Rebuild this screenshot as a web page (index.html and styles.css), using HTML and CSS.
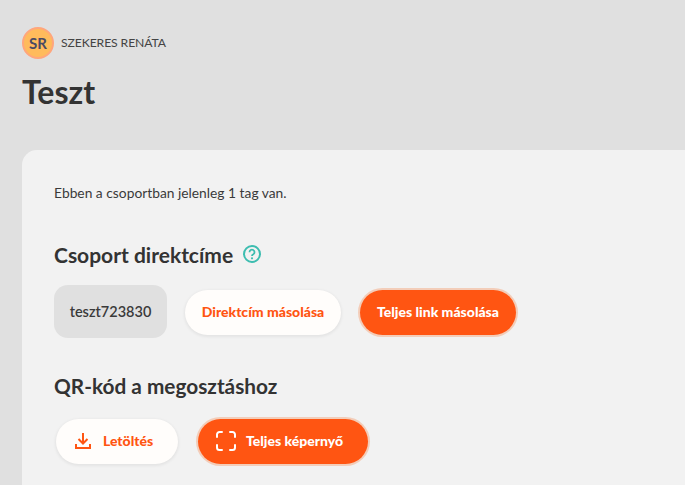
FILE: index.html
```html
<!DOCTYPE html>
<html lang="hu">
<head>
<meta charset="utf-8">
<title>Teszt</title>
<link rel="stylesheet" href="styles.css">
</head>
<body>
<main class="page">
  <div class="owner">
    <span class="avatar">SR</span>
    <span class="owner-name">SZEKERES RENÁTA</span>
  </div>
  <h1 class="title">Teszt</h1>
  <section class="card">
    <p class="intro">Ebben a csoportban jelenleg 1 tag van.</p>
    <h2 class="heading heading-link">Csoport direktcíme
      <svg class="help" width="18" height="18" viewBox="0 0 18 18" aria-hidden="true">
        <circle cx="9" cy="9" r="8" fill="none" stroke="#3dbdb0" stroke-width="2"/>
        <path d="M6.500 7.200a2.500 2.500 0 1 1 3.800 2.100c-.9.500-1.300.8-1.300 1.600" fill="none" stroke="#3dbdb0" stroke-width="1.800"/>
        <circle cx="9" cy="13.300" r="1.100" fill="#3dbdb0"/>
      </svg>
    </h2>
    <div class="row row-link">
      <span class="code">teszt723830</span>
      <button class="btn btn-light btn-direct">Direktcím másolása</button>
      <button class="btn btn-solid btn-full">Teljes link másolása</button>
    </div>
    <h2 class="heading heading-qr">QR-kód a megosztáshoz</h2>
    <div class="row row-qr">
      <button class="btn btn-light btn-download">
        <svg width="16" height="16" viewBox="0 0 16 16" aria-hidden="true">
          <path d="M8 0v10.500M3.500 6 8 10.500 12.500 6M1 11v4h14v-4" fill="none" stroke="#ff5512" stroke-width="2"/>
        </svg>
        Letöltés
      </button>
      <button class="btn btn-solid btn-screen">
        <svg width="20" height="20" viewBox="0 0 20 20" aria-hidden="true">
          <path d="M1 6V3.500A2.500 2.500 0 0 1 3.500 1H6M14 1h2.500A2.500 2.500 0 0 1 19 3.500V6M19 14v2.500a2.500 2.500 0 0 1-2.500 2.500H14M6 19H3.500A2.500 2.500 0 0 1 1 16.500V14" fill="none" stroke="#fff" stroke-width="2" stroke-linecap="round"/>
        </svg>
        Teljes képernyő
      </button>
    </div>
  </section>
</main>
</body>
</html>
```
FILE: styles.css
```css
* { box-sizing: border-box; }
html, body { margin: 0; height: 100%; overflow: hidden; }
body {
  background: #e0e0e0;
  color: #333;
  font-family: Lato, "Noto Sans", sans-serif;
}
.page { padding: 27px 0 0 22px; }
.owner { display: flex; align-items: center; gap: 7px; height: 32px; }
.avatar {
  width: 32px; height: 32px; border-radius: 50%;
  background: #ffbb5c; border: 2px solid #ffa67c;
  display: flex; align-items: center; justify-content: center;
  font-size: 15px; font-weight: 700; color: #4a4a63;
}
.owner-name { font-size: 12.200px; color: #444; letter-spacing: -0.1px; padding-bottom: 2px; }
.title { margin: 13px 0 0; font-size: 32px; line-height: 40px; font-weight: 700; color: #333; height: 78px; }
.card {
  background: #f2f2f2;
  border-radius: 15px 0 0 0;
  padding: 33px 0 0 32px;
  height: 340px;
}
.intro { margin: 0; font-size: 13.800px; line-height: 20px; color: #3a3a3a; }
.heading { margin: 0; font-size: 21px; line-height: 28px; font-weight: 700; color: #333; }
.heading-link { display: flex; align-items: center; gap: 10px; margin-top: 38px; }
.help { margin-bottom: 2px; }
.heading-qr { margin-top: 34px; font-size: 20.800px; }
.row { display: flex; align-items: center; }
.row-link { margin-top: 16px; gap: 18px; }
.row-qr { margin-top: 19px; gap: 20px; margin-left: 2px; }
.code {
  width: 113px; height: 53px; border-radius: 14px;
  background: #e0e0e0; color: #3a3a3a;
  display: flex; align-items: center; justify-content: center;
  font-size: 14.500px; font-weight: 600;
}
.btn {
  height: 45px; border-radius: 23px; border: 0; padding: 0 0 2px;
  display: flex; align-items: center; justify-content: center;
  font-family: inherit; font-size: 14px; font-weight: 900;
}
.row-link .btn { margin-top: 2px; }
.btn-light { background: #fffdfb; color: #ff5512; box-shadow: 0 1px 3px 1px rgba(0,0,0,.06); }
.btn-solid { background: #ff5512; color: #fff; box-shadow: 0 0 0 2px #f3cdb9; }
.btn-direct { width: 156px; }
.btn-full { width: 156px; margin-left: 1px; }
.btn-download { width: 122px; gap: 12px; padding-right: 6px; }
.btn-screen { width: 170px; gap: 10px; padding-right: 7px; }
```
